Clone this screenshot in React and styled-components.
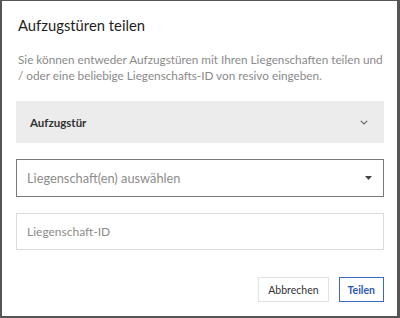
import styled, { createGlobalStyle } from "styled-components";

const GlobalStyle = createGlobalStyle`
  html, body {
    margin: 0;
    padding: 0;
    background: #fff;
  }
  * {
    box-sizing: border-box;
  }
`;

const Dialog = styled.div`
  width: 400px;
  height: 318px;
  border: 2px solid #555;
  border-top-width: 1px;
  border-right-width: 3px;
  background: #fff;
  padding: 14px 13px 0 14px;
  font-family: Lato, "Liberation Sans", sans-serif;
  display: flex;
  flex-direction: column;
`;

const Title = styled.h2`
  margin: 0;
  padding-left: 2px;
  font-size: 14.8px;
  font-weight: 400;
  color: #1e1e1e;
  line-height: 20px;
`;

const Intro = styled.p`
  margin: 17px -4px 0 0;
  padding-left: 2px;
  font-size: 11.75px;
  line-height: 16px;
  color: #8a8a8a;
`;

const Accordion = styled.div`
  margin-top: 17px;
  height: 42px;
  background: #ececec;
  display: flex;
  align-items: center;
  justify-content: space-between;
  padding: 0 16px 0 14px;
  font-size: 11.5px;
  font-weight: 700;
  color: #333;
`;

const Field = styled.div`
  margin-top: ${({ $gap }) => $gap}px;
  height: ${({ $h }) => $h}px;
  border: ${({ $strong }) => ($strong ? "1.5px solid #7a7a7a" : "1px solid #dcdcdc")};
  display: flex;
  align-items: center;
  justify-content: space-between;
  padding: 0 11px 0 10px;
  font-size: ${({ $size }) => $size}px;
  color: #8c8c8c;
`;

const Actions = styled.div`
  margin-top: 27px;
  display: flex;
  justify-content: flex-end;
  gap: 10px;
`;

const Button = styled.button`
  height: 25px;
  padding: 0 ${({ $primary }) => ($primary ? 8 : 9)}px;
  background: #fff;
  border: 1px solid ${({ $primary }) => ($primary ? "#3f67c4" : "#e2e2e2")};
  color: ${({ $primary }) => ($primary ? "#2f58b8" : "#333")};
  font-family: inherit;
  font-size: 10.5px;
  font-weight: ${({ $primary }) => ($primary ? 700 : 400)};
  cursor: pointer;
`;

const Chevron = () => (
  <svg width="8" height="5" viewBox="0 0 8 5" fill="none">
    <path d="M0.8 0.8 L4 4 L7.2 0.8" stroke="#666" strokeWidth="1.2" />
  </svg>
);

const Caret = () => (
  <svg width="7" height="4" viewBox="0 0 7 4">
    <path d="M0 0 H7 L3.5 4 Z" fill="#444" />
  </svg>
);

export default function App() {
  return (
    <>
      <GlobalStyle />
      <Dialog>
        <Title>Aufzugstüren teilen</Title>
        <Intro>
          Sie können entweder Aufzugstüren mit Ihren Liegenschaften teilen und
          / oder eine beliebige Liegenschafts-ID von resivo eingeben.
        </Intro>
        <Accordion>
          <span>Aufzugstür</span>
          <Chevron />
        </Accordion>
        <Field $gap={16} $h={38} $size={12.8} $strong>
          <span>Liegenschaft(en) auswählen</span>
          <Caret />
        </Field>
        <Field $gap={16} $h={37} $size={12}>
          <span>Liegenschaft-ID</span>
        </Field>
        <Actions>
          <Button>Abbrechen</Button>
          <Button $primary>Teilen</Button>
        </Actions>
      </Dialog>
    </>
  );
}
